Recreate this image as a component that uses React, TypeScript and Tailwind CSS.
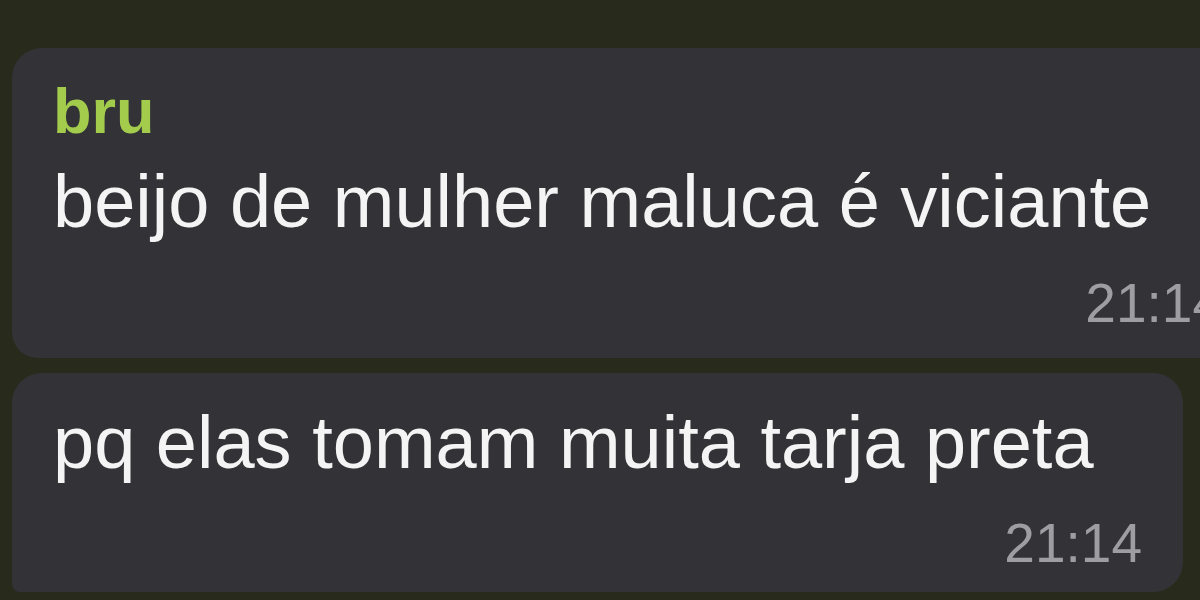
export default function App() {
  return (
    <div className="w-[1200px] h-[600px] overflow-hidden bg-[#282b1c] font-['Liberation_Sans',Arial,sans-serif]">
      <div className="flex flex-col gap-[15px] pt-[48px] pl-[12px]">
        {/* incoming message with sender name */}
        <div className="w-[1252px] rounded-[30px] rounded-bl-[26px] bg-[#333337] pl-[41px] pr-[41px] pt-[32px] pb-[27px]">
          <div className="text-[63px] leading-[63px] font-bold text-[#a4cc4c]">bru</div>
          <div className="mt-[19px] text-[74px] leading-[80px] text-[#f4f4f4]">
            beijo de mulher maluca é viciante
          </div>
          <div className="mt-[34px] text-right text-[55px] leading-[55px] text-[#9d9da2]">21:14</div>
        </div>

        {/* follow-up message */}
        <div className="w-[1171px] rounded-[30px] rounded-bl-[8px] bg-[#333337] pl-[41px] pr-[41px] pt-[30px] pb-[21px]">
          <div className="text-[74px] leading-[80px] text-[#f4f4f4]">pq elas tomam muita tarja preta</div>
          <div className="mt-[33px] text-right text-[55px] leading-[55px] text-[#9d9da2]">21:14</div>
        </div>
      </div>
    </div>
  );
}
